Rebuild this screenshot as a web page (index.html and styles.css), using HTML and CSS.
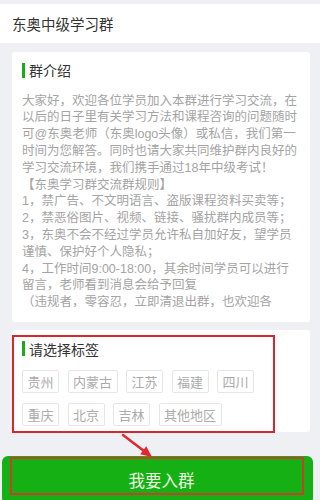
FILE: index.html
```html
<!DOCTYPE html>
<html lang="zh-CN">
<head>
<meta charset="utf-8">
<title>东奥中级学习群</title>
<link rel="stylesheet" href="styles.css">
</head>
<body>
<div class="page">
  <header class="topbar">东奥中级学习群</header>

  <section class="card intro">
    <h2 class="sec-title">群介绍</h2>
    <div class="intro-text">大家好，欢迎各位学员加入本群进行学习交流，在<br>以后的日子里有关学习方法和课程咨询的问题随时<br>可@东奥老师（东奥logo头像）或私信，我们第一<br>时间为您解答。同时也请大家共同维护群内良好的<br>学习交流环境，我们携手通过18年中级考试！<br>【东奥学习群交流群规则】<br>1，禁广告、不文明语言、盗版课程资料买卖等；<br>2，禁恶俗图片、视频、链接、骚扰群内成员等；<br>3，东奥不会不经过学员允许私自加好友，望学员<br>谨慎、保护好个人隐私；<br>4，工作时间9:00-18:00，其余时间学员可以进行<br>留言，老师看到消息会给予回复<br>（违规者，零容忍，立即清退出群，也欢迎各</div>
  </section>

  <section class="card tags-card">
    <h2 class="sec-title">请选择标签</h2>
    <div class="tags">
      <span class="tag">贵州</span>
      <span class="tag">内蒙古</span>
      <span class="tag">江苏</span>
      <span class="tag">福建</span>
      <span class="tag">四川</span>
      <span class="tag">重庆</span>
      <span class="tag">北京</span>
      <span class="tag">吉林</span>
      <span class="tag">其他地区</span>
    </div>
  </section>

  <button class="join" type="button">我要入群</button>

  <div class="mark mark-tags"></div>
  <div class="mark mark-btn"></div>
  <svg class="arrow" width="40" height="32" viewBox="0 0 40 32">
    <line x1="5" y1="5" x2="26" y2="21" stroke="#e0282e" stroke-width="2.5" stroke-linecap="round"/>
    <polygon points="34,27 22.2,24.3 28.2,16.3" fill="#e0282e"/>
  </svg>
</div>
</body>
</html>
```

FILE: styles.css
```css
html, body {
  margin: 0;
  padding: 0;
}

body {
  background: #eef0f4;
  font-family: "Noto Sans CJK SC", "Noto Sans", sans-serif;
}

.page {
  position: relative;
  height: 500px;
  padding-top: 4px;
  box-sizing: border-box;
  overflow: hidden;
}

.topbar {
  background: #fff;
  height: 39px;
  line-height: 39px;
  padding-left: 12px;
  font-size: 14.5px;
  color: #333;
}

.card {
  background: #fff;
  margin: 9px 10px 0 12px;
  border-radius: 3px;
  padding: 8px 10px 12px;
}

.sec-title {
  margin: 0;
  display: flex;
  align-items: center;
  gap: 4.5px;
  font-size: 14px;
  line-height: 20px;
  font-weight: normal;
  color: #333;
}

.sec-title::before {
  content: "";
  width: 2.5px;
  height: 15px;
  background: #1aad19;
}

.intro-text {
  margin-top: 11.6px;
  padding-top: 1px;
  font-family: "Liberation Sans", "Noto Sans CJK SC", sans-serif;
  font-size: 12.5px;
  line-height: 16.8px;
  height: 217.4px;
  white-space: nowrap;
  color: #a4a4a4;
}

.tags-card {
  margin-top: 8px;
  padding: 9px 10px 6px;
}

.tags {
  margin-top: 11px;
  display: flex;
  flex-wrap: wrap;
  column-gap: 8.5px;
  row-gap: 10px;
  width: 250px;
}

.tag {
  border: 1px solid #e6e6e6;
  border-radius: 2px;
  padding: 0 4.5px;
  font-size: 13px;
  line-height: 21px;
  color: #ababab;
  background: #fff;
}

.join {
  display: block;
  margin: 24px 0 0 2px;
  width: 311px;
  height: 48px;
  border: none;
  border-radius: 6px;
  background: #14b014;
  color: #f0f8e4;
  font-family: "Noto Sans CJK SC", sans-serif;
  font-size: 16.5px;
  padding: 0 0 0 8px;
  text-align: center;
}

.mark {
  position: absolute;
  box-sizing: border-box;
}

.mark-tags {
  left: 12px;
  top: 335px;
  width: 263px;
  height: 98px;
  border: 2px solid #d8262e;
}

.mark-btn {
  left: 10px;
  top: 457px;
  width: 294px;
  height: 38px;
  border: 2px solid #c8402c;
}

.arrow {
  position: absolute;
  left: 118px;
  top: 430px;
}
```
